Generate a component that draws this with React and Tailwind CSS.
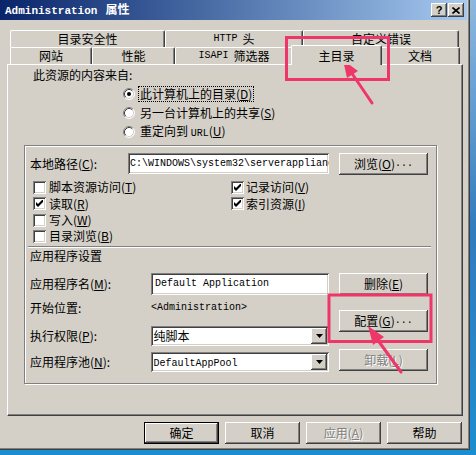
import React from "react";

const raised =
  "shadow-[inset_-1px_-1px_0_#404040,inset_1px_1px_0_#ffffff,inset_-2px_-2px_0_#808080,inset_2px_2px_0_#d4d0c8]";
const sunken =
  "shadow-[inset_1px_1px_0_#808080,inset_-1px_-1px_0_#ffffff,inset_2px_2px_0_#404040,inset_-2px_-2px_0_#d4d0c8]";
const mono = "font-['Liberation_Mono','DejaVu_Sans_Mono',monospace] text-[10px]";

function Btn({ children, className = "", disabled = false }) {
  return (
    <div
      className={`${raised} bg-[#d4d0c8] flex items-center justify-center leading-none ${
        disabled ? "text-[#808080] [text-shadow:1px_1px_0_#ffffff]" : "text-black"
      } ${className}`}
    >
      {children}
    </div>
  );
}

function Check({ checked }) {
  return (
    <div className={`w-[13px] h-[13px] shrink-0 bg-white ${sunken} flex items-center justify-center`}>
      {checked && (
        <svg width="7" height="7" viewBox="0 0 7 7">
          <polygon points="0,2 2,4 7,-1 7,2 2,7 0,5" fill="#000" />
        </svg>
      )}
    </div>
  );
}

function Radio({ checked }) {
  return (
    <svg width="12" height="12" viewBox="0 0 12 12" className="shrink-0">
      <circle cx="6" cy="6" r="5" fill="#fff" />
      <path d="M2.11 9.89 A5.5 5.5 0 0 1 9.89 2.11" stroke="#808080" fill="none" />
      <path d="M9.89 2.11 A5.5 5.5 0 0 1 2.11 9.89" stroke="#ffffff" fill="none" />
      <path d="M2.82 9.18 A4.5 4.5 0 0 1 9.18 2.82" stroke="#404040" fill="none" />
      <path d="M9.18 2.82 A4.5 4.5 0 0 1 2.82 9.18" stroke="#d4d0c8" fill="none" />
      {checked && <circle cx="6" cy="6" r="2" fill="#000" />}
    </svg>
  );
}

function Select({ value, className = "" }) {
  return (
    <div className={`w-[179px] h-[20px] bg-white ${sunken} flex items-center pl-[3px] pr-[2px] ${className}`}>
      <span className="leading-none">{value}</span>
      <div className={`ml-auto w-[16px] h-[16px] bg-[#d4d0c8] ${raised} flex items-center justify-center`}>
        <svg width="7" height="4" viewBox="0 0 7 4">
          <polygon points="0,0 7,0 3.5,4" fill="#000" />
        </svg>
      </div>
    </div>
  );
}

function Tab({ children, w, selected = false }) {
  if (selected) {
    return (
      <div
        className={`relative z-10 -mt-[2px] -mx-[2px] h-[20px] ${w} bg-[#d4d0c8] border-t border-l border-r border-t-white border-l-white border-r-[#404040] rounded-t-[2px] shadow-[inset_-1px_0_0_#808080] flex items-center justify-center leading-none`}
      >
        {children}
      </div>
    );
  }
  return (
    <div
      className={`h-[17px] ${w} bg-[#d4d0c8] border-t border-l border-r border-t-white border-l-white border-r-[#404040] rounded-t-[2px] shadow-[inset_-1px_0_0_#808080] flex items-center justify-center leading-none`}
    >
      {children}
    </div>
  );
}

export default function App() {
  return (
    <div className="relative w-[476px] h-[455px] overflow-hidden bg-linear-to-b from-[#8fb8dc] via-[#2f7cc0] to-[#1b8ed0] font-['Noto_Sans_CJK_SC','Noto_Sans',sans-serif] text-[12px] text-black">
      <div className="w-[470px] h-[450px] bg-[#d4d0c8] shadow-[inset_-1px_-1px_0_#404040,inset_-2px_-2px_0_#808080] flex flex-col">
        {/* Title bar */}
        <div className="h-[20px] mr-[3px] bg-linear-to-r from-[#0a246a] to-[#a6caf0] flex items-center pl-[5px] pr-[3px]">
          <span className="text-white font-bold leading-none flex items-baseline">
            <span className="font-['Liberation_Mono',monospace] text-[11px] font-bold">Administration</span>
            <span className="ml-[8px] text-[12px] font-bold">属性</span>
          </span>
          <div className="ml-auto flex gap-[1px]">
            <div className={`w-[16px] h-[14px] bg-[#d4d0c8] ${raised} flex items-center justify-center`}>
              <span className="font-['Liberation_Sans',sans-serif] font-bold text-[11px] leading-none">?</span>
            </div>
            <div className={`w-[16px] h-[14px] bg-[#d4d0c8] ${raised} flex items-center justify-center`}>
              <svg width="8" height="7" viewBox="0 0 8 7">
                <path d="M0.5 0.5 L7.5 6.5 M7.5 0.5 L0.5 6.5" stroke="#000" strokeWidth="1.6" />
              </svg>
            </div>
          </div>
        </div>

        {/* Body */}
        <div className="pl-[7px] mt-[10px]">
          {/* Tabs */}
          <div className="ml-[3px]">
            <div className="flex">
              <Tab w="w-[155px]">目录安全性</Tab>
              <Tab w="w-[138px]">
                <span className={`${mono} mr-[5px]`}>HTTP</span>头
              </Tab>
              <Tab w="w-[156px]">自定义错误</Tab>
            </div>
            <div className="flex h-[17px] items-start">
              <Tab w="w-[82px]">网站</Tab>
              <Tab w="w-[83px]">性能</Tab>
              <Tab w="w-[118px]">
                <span className={`${mono} mr-[5px]`}>ISAPI</span>筛选器
              </Tab>
              <Tab w="w-[91px]" selected>
                主目录
              </Tab>
              <Tab w="w-[80px]">文档</Tab>
            </div>
          </div>

          {/* Panel */}
          <div className="w-[456px] h-[352px] border border-t-white border-l-white border-r-[#404040] border-b-[#404040] shadow-[inset_-1px_-1px_0_#808080] flex flex-col">
            <div className="pl-[25px] mt-[2px] h-[16px] flex items-center leading-none">此资源的内容来自:</div>
            <div className="pl-[115px] mt-[1px] flex flex-col">
              <div className="h-[19px] flex items-center gap-[4px]">
                <Radio checked />
                <span className="leading-none px-[1px] py-[1px] outline outline-1 outline-dotted outline-black">
                  此计算机上的目录(<u>D</u>)
                </span>
              </div>
              <div className="h-[19px] flex items-center gap-[5px]">
                <Radio />
                <span className="leading-none">另一台计算机上的共享(<u>S</u>)</span>
              </div>
              <div className="h-[19px] flex items-center gap-[5px]">
                <Radio />
                <span className="leading-none">
                  重定向到 <span className={mono}>URL</span>(<u>U</u>)
                </span>
              </div>
            </div>

            {/* Group box */}
            <div className="ml-[16px] mt-[4px] w-[413px] h-[239px] border border-[#808080] shadow-[inset_1px_1px_0_#ffffff,1px_1px_0_#ffffff] flex flex-col">
              <div className="mt-[7px] pl-[5px] h-[22px] flex items-center">
                <div className="w-[98px] leading-none">
                  本地路径(<u>C</u>):
                </div>
                <div className={`w-[201px] h-[21px] self-start bg-white ${sunken} flex items-center pl-[2px] overflow-hidden whitespace-nowrap`}>
                  <span className={`${mono} leading-none`}>C:\WINDOWS\system32\serverappliance\web</span>
                </div>
                <Btn className="ml-[10px] w-[89px] h-[22px]">
                  浏览(<u>O</u>)<span className={mono}>...</span>
                </Btn>
              </div>

              <div className="mt-[4px] pl-[8px] flex">
                <div className="w-[198px] flex flex-col">
                  <div className="h-[16px] flex items-center gap-[3px]">
                    <Check />
                    <span className="leading-none">脚本资源访问(<u>T</u>)</span>
                  </div>
                  <div className="h-[17px] flex items-center gap-[3px]">
                    <Check checked />
                    <span className="leading-none">读取(<u>R</u>)</span>
                  </div>
                  <div className="h-[16px] flex items-center gap-[3px]">
                    <Check />
                    <span className="leading-none">写入(<u>W</u>)</span>
                  </div>
                  <div className="h-[16px] flex items-center gap-[3px]">
                    <Check />
                    <span className="leading-none">目录浏览(<u>B</u>)</span>
                  </div>
                </div>
                <div className="flex flex-col">
                  <div className="h-[16px] flex items-center gap-[2px]">
                    <Check checked />
                    <span className="leading-none">记录访问(<u>V</u>)</span>
                  </div>
                  <div className="h-[17px] flex items-center gap-[2px]">
                    <Check checked />
                    <span className="leading-none">索引资源(<u>I</u>)</span>
                  </div>
                </div>
              </div>

              <div className="mt-[2px] ml-[3px] w-[403px] h-[2px] border-t border-t-[#808080] border-b border-b-white" />

              <div className="pl-[5px] h-[16px] flex items-center leading-none">应用程序设置</div>

              <div className="mt-[9px] pl-[5px] flex">
                <div className="w-[299px] flex flex-col">
                  <div className="h-[22px] flex items-center">
                    <div className="w-[121px] leading-none">
                      应用程序名(<u>M</u>):
                    </div>
                    <div className={`w-[178px] h-[22px] bg-white ${sunken} flex items-center pl-[4px] overflow-hidden whitespace-nowrap`}>
                      <span className={`${mono} leading-none`}>Default Application</span>
                    </div>
                  </div>
                  <div className="mt-[5px] h-[16px] flex items-center">
                    <div className="w-[121px] leading-none">开始位置:</div>
                    <span className={`${mono} leading-none`}>&lt;Administration&gt;</span>
                  </div>
                  <div className="mt-[10px] h-[20px] flex items-center">
                    <div className="w-[121px] leading-none">
                      执行权限(<u>P</u>):
                    </div>
                    <Select className="w-[178px]" value="纯脚本" />
                  </div>
                  <div className="mt-[6px] h-[20px] flex items-center">
                    <div className="w-[121px] leading-none">
                      应用程序池(<u>N</u>):
                    </div>
                    <Select
                      className="w-[178px]"
                      value={<span className={mono}>DefaultAppPool</span>}
                    />
                  </div>
                </div>
                <div className="ml-[10px] w-[89px] flex flex-col">
                  <Btn className="h-[22px]">
                    删除(<u>E</u>)
                  </Btn>
                  <Btn className="mt-[15px] h-[22px]">
                    配置(<u>G</u>)<span className={mono}>...</span>
                  </Btn>
                  <Btn disabled className="mt-[17px] h-[22px]">
                    卸载(<u>L</u>)
                  </Btn>
                </div>
              </div>
            </div>
          </div>
        </div>

        {/* Bottom buttons */}
        <div className="mt-[6px] pr-[8px] flex justify-end gap-[6px]">
          <div className="w-[75px] h-[22px] border border-black">
            <Btn className="w-full h-full">确定</Btn>
          </div>
          <Btn className="w-[75px] h-[22px]">取消</Btn>
          <Btn disabled className="w-[75px] h-[22px]">
            应用(<u>A</u>)
          </Btn>
          <Btn className="w-[75px] h-[22px]">帮助</Btn>
        </div>
      </div>

      {/* Annotation overlay */}
      <svg
        className="absolute left-0 top-0 pointer-events-none"
        width="476"
        height="455"
        viewBox="0 0 476 455"
      >
        <rect x="286.5" y="37.5" width="102" height="42" fill="none" stroke="#ee3768" strokeWidth="3" />
        <line x1="372" y1="103" x2="351" y2="72" stroke="#ee3768" strokeWidth="3" strokeLinecap="round" />
        <polygon points="343,60 358,71 347,78" fill="#ee3768" />
        <rect x="329" y="295" width="102" height="46.5" fill="none" stroke="#ee3768" strokeWidth="3" />
        <line x1="401" y1="372" x2="377" y2="339" stroke="#ee3768" strokeWidth="3" strokeLinecap="round" />
        <polygon points="368,326 384,337 373,345" fill="#ee3768" />
      </svg>
    </div>
  );
}
